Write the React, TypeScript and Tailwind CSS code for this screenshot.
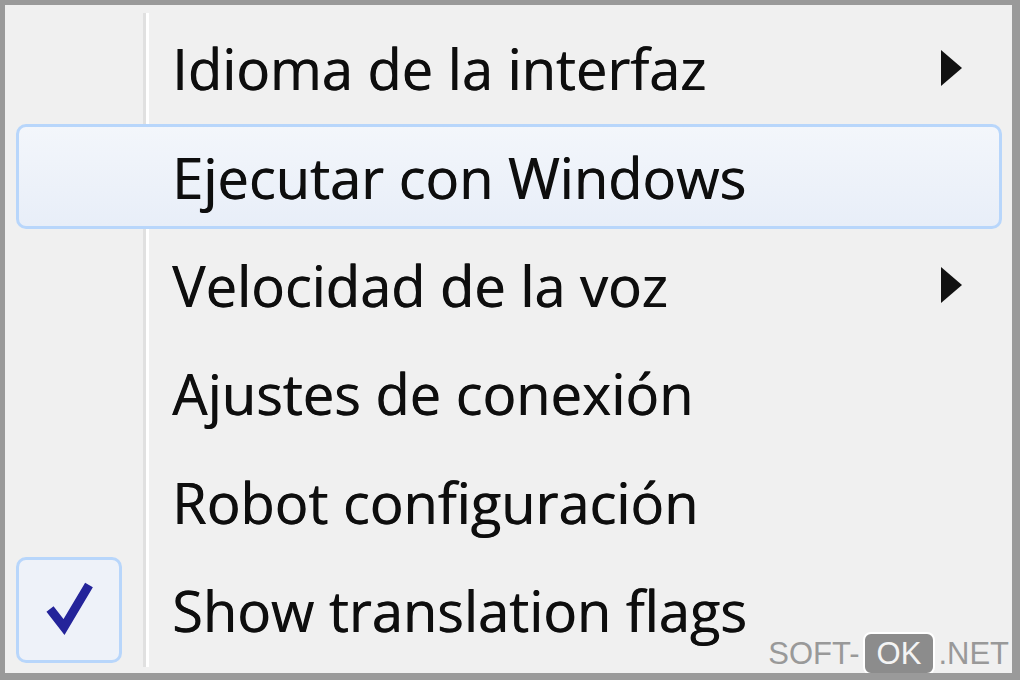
import React from 'react';

interface MenuItem {
  label: string;
  submenu?: boolean;
  hover?: boolean;
  checked?: boolean;
}

const ITEMS: MenuItem[] = [
  { label: 'Idioma de la interfaz', submenu: true },
  { label: 'Ejecutar con Windows', hover: true },
  { label: 'Velocidad de la voz', submenu: true },
  { label: 'Ajustes de conexión' },
  { label: 'Robot configuración' },
  { label: 'Show translation flags', checked: true },
];

const Arrow = () => (
  <svg width="24" height="38" viewBox="0 0 24 38" className="shrink-0">
    <polygon points="1,1 22,19 1,37" fill="#111" />
  </svg>
);

const Check = () => (
  <svg width="60" height="60" viewBox="0 0 60 60">
    <polyline points="11,29 25,47 50,5" fill="none" stroke="#24249a" strokeWidth="9" strokeLinejoin="miter" />
  </svg>
);

const Row: React.FC<{ item: MenuItem }> = ({ item }) => (
  <div className="relative h-[108.4px] flex items-center">
    {item.hover && (
      <div className="absolute left-[11px] right-[10px] top-[1.5px] bottom-[1.5px] rounded-[10px] border-[3px] border-[#b8d6fb] bg-gradient-to-b from-[#f3f6fb] to-[#e8eef8]" />
    )}
    <div className="relative w-[167px] h-full flex items-center">
      {item.checked && (
        <div className="ml-[11px] w-[106px] h-[106px] rounded-[10px] border-[3px] border-[#b8d6fb] bg-[#eef2f9] flex items-center justify-center">
          <Check />
        </div>
      )}
    </div>
    <span className="relative flex-1 text-[#0e0e0e] text-[56px] leading-none font-['Open_Sans',sans-serif] [text-shadow:0.6px_0_0_#0e0e0e]">
      {item.label}
    </span>
    <div className="relative w-[72px] flex justify-start">
      {item.submenu && <Arrow />}
    </div>
  </div>
);

export default function App() {
  return (
    <div className="w-[1020px] h-[680px] bg-[#f0f0f0] border-l-[5px] border-t-[5px] border-r-[8px] border-b-[7px] border-[#9a9a9a] relative overflow-hidden">
      <div className="absolute left-[138px] top-[8px] bottom-[6px] w-[3px] bg-[#e0e0e0]" />
      <div className="absolute left-[141px] top-[8px] bottom-[6px] w-[3px] bg-white" />
      <div className="pt-[9px]">
        {ITEMS.map((item, i) => (
          <Row key={i} item={item} />
        ))}
      </div>
      <div className="absolute right-[3px] bottom-[-2px] flex items-center font-['Liberation_Sans',Arial,sans-serif] text-[31px] leading-none text-[#999]">
        <span>SOFT-</span>
        <span className="mx-[3px] px-[12px] h-[43px] flex items-center rounded-[8px] bg-[#8c8c8c] text-[#f4f4f4] border-2 border-white">OK</span>
        <span>.NET</span>
      </div>
    </div>
  );
}
